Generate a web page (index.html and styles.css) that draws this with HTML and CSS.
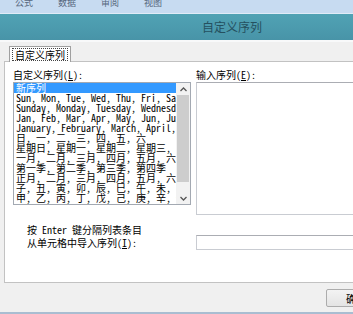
FILE: index.html
```html
<html>
<head>
	<meta charset="utf-8">
	<meta name="viewport" content="width=device-width, initial-scale=1">
	<title>自定义序列</title>
	<link rel="stylesheet" href="styles.css">
</head>
<body>

	<div class="menubar">
		<span>公式</span><span>数据</span><span>审阅</span><span>视图</span>
	</div>

	<div class="dialog">
		<div class="titlebar">自定义序列</div>
		<div class="tabstrip">
			<div class="tab"><span>自定义序列</span></div>
		</div>

		<div class="panel">
			<div class="col left">
				<div class="label">自定义序列(<u>L</u>):</div>
				<div class="listbox">
					<div class="items">
						<div class="item selected">新序列</div>
						<div class="item">Sun, Mon, Tue, Wed, Thu, Fri, Sat</div>
						<div class="item">Sunday, Monday, Tuesday, Wednesday, Thursday, Friday, Saturday</div>
						<div class="item">Jan, Feb, Mar, Apr, May, Jun, Jul, Aug, Sep, Oct, Nov, Dec</div>
						<div class="item">January, February, March, April, May, June, July</div>
						<div class="item">日, 一, 二, 三, 四, 五, 六</div>
						<div class="item">星期日, 星期一, 星期二, 星期三, 星期四, 星期五, 星期六</div>
						<div class="item">一月, 二月, 三月, 四月, 五月, 六月, 七月, 八月</div>
						<div class="item">第一季, 第二季, 第三季, 第四季</div>
						<div class="item">正月, 二月, 三月, 四月, 五月, 六月, 七月, 八月</div>
						<div class="item">子, 丑, 寅, 卯, 辰, 巳, 午, 未, 申, 酉, 戌, 亥</div>
						<div class="item">甲, 乙, 丙, 丁, 戊, 己, 庚, 辛, 壬, 癸</div>
					</div>
					<div class="scrollbar">
						<div class="sb-btn">
							<svg width="7" height="5" viewBox="0 0 7 5"><polyline points="0.5,4 3.5,1 6.5,4" fill="none" stroke="#555" stroke-width="1.3"/></svg>
						</div>
						<div class="thumb"></div>
						<div class="track"></div>
						<div class="sb-btn">
							<svg width="7" height="5" viewBox="0 0 7 5"><polyline points="0.5,1 3.5,4 6.5,1" fill="none" stroke="#555" stroke-width="1.3"/></svg>
						</div>
					</div>
				</div>
				<div class="hints">
					<div>按 Enter 键分隔列表条目</div>
					<div>从单元格中导入序列(<u>I</u>):</div>
				</div>
			</div>

			<div class="col right">
				<div class="label">输入序列(<u>E</u>):</div>
				<div class="textarea"></div>
				<div class="import"></div>
			</div>
		</div>

		<div class="footer">
			<button>确定</button>
		</div>
	</div>

</body>
</html>
```

FILE: styles.css
```css
*{
	box-sizing: border-box;
	padding: 0;
	margin: 0;
}
body
{
	width: 353px;
	height: 314px;
	overflow: hidden;
	background: #f0f0f0;
	font-family: "Noto Sans Mono CJK SC", "Noto Sans CJK SC", monospace;
	font-size: 10px;
	color: #000;
}
.menubar
{
	height: 14px;
	background: #c7dbf1;
	border-bottom: 1px solid #e0ebf7;
	display: flex;
	gap: 25px;
	padding-left: 15px;
	overflow: hidden;
}
.menubar span
{
	font-size: 9px;
	line-height: 12px;
	margin-top: -3px;
	color: #56677d;
}
.dialog
{
	width: 353px;
	overflow: hidden;
	border-bottom: 2px solid #a9bdd1;
}
.titlebar
{
	height: 26px;
	background: linear-gradient(#50a2b4, #4894a8);
	padding-left: 202px;
	font-size: 12px;
	line-height: 26px;
	color: #25505f;
}
.tabstrip
{
	height: 21px;
	border-top: 2px solid #f8f9fa;
	padding: 4px 0 0 9px;
}
.tab
{
	position: relative;
	z-index: 1;
	display: inline-block;
	height: 16px;
	background: #fff;
	border: 1px solid #a0a0a0;
	border-bottom: 0;
	padding: 1px 2px 0;
}
.tab span
{
	display: block;
	height: 13px;
	line-height: 12px;
	padding: 0 2px;
	border: 1px dotted #444;
}
.panel
{
	height: 222px;
	margin-left: 4px;
	background: #fff;
	border: 1px solid #c2c2c2;
	border-right: 0;
	display: flex;
	gap: 5px;
	padding: 6px 0 0 8px;
}
.col
{
	display: flex;
	flex-direction: column;
}
.left
{
	width: 178px;
}
.right
{
	flex: 1;
}
.label
{
	height: 14px;
	line-height: 13px;
}
.listbox
{
	height: 123px;
	border: 1px solid #a3a9b2;
	display: flex;
}
.items
{
	flex: 1;
	overflow: hidden;
	white-space: nowrap;
	line-height: 10px;
}
.item
{
	height: 10px;
	padding-left: 2px;
}
.selected
{
	background: #3399ff;
	color: #fff;
}
.scrollbar
{
	width: 14px;
	background: #f2f2f2;
	display: flex;
	flex-direction: column;
}
.sb-btn
{
	height: 12px;
	display: flex;
	justify-content: center;
	align-items: center;
}
.thumb
{
	height: 87px;
	margin: 0 1px;
	background: #cdcdcd;
}
.track
{
	flex: 1;
}
.hints
{
	margin-top: 18px;
	padding-left: 14px;
	line-height: 13px;
}
.textarea
{
	height: 133px;
	border: 1px solid #c9ccd2;
	border-top-color: #abadb3;
	border-right: 0;
}
.import
{
	height: 15px;
	margin-top: 20px;
	border: 1px solid #c9ccd2;
	border-top-color: #abadb3;
	border-right: 0;
}
.footer
{
	height: 29px;
	padding: 6px 0 0 326px;
	display: flex;
	align-items: flex-start;
	overflow: hidden;
}
.footer button
{
	flex-shrink: 0;
	width: 60px;
	height: 18px;
	border: 1px solid #acacac;
	border-radius: 2px;
	background: linear-gradient(#f3f3f3, #e4e4e4);
	font-family: inherit;
	font-size: 10px;
	line-height: 15px;
	padding-left: 19px;
	text-align: left;
	color: #000;
}
```
